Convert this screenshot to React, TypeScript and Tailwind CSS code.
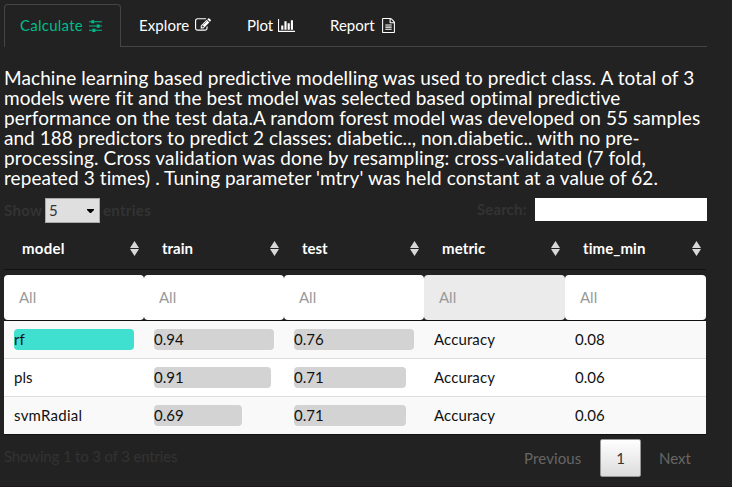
import React from "react";

const columns = ["model", "train", "test", "metric", "time_min"];

const rows = [
  { model: "rf", best: true, train: "0.94", trainW: 120, test: "0.76", testW: 120, metric: "Accuracy", time: "0.08" },
  { model: "pls", best: false, train: "0.91", trainW: 117, test: "0.71", testW: 112, metric: "Accuracy", time: "0.06" },
  { model: "svmRadial", best: false, train: "0.69", trainW: 88, test: "0.71", testW: 112, metric: "Accuracy", time: "0.06" },
];

const summary = [
  { text: "Machine learning based predictive modelling was used to predict class. A total of 3", tracking: "tracking-[0.09px]" },
  { text: "models were fit and the best model was selected based optimal predictive", tracking: "tracking-[0.05px]" },
  { text: "performance on the test data.A random forest model was developed on 55 samples", tracking: "tracking-[0.065px]" },
  { text: "and 188 predictors to predict 2 classes: diabetic.., non.diabetic.. with no pre-", tracking: "tracking-[0.035px]" },
  { text: "processing. Cross validation was done by resampling: cross-validated (7 fold,", tracking: "tracking-[0.155px]" },
  { text: "repeated 3 times) . Tuning parameter 'mtry' was held constant at a value of 62.", tracking: "tracking-[0.09px]" },
];

const grid = "grid grid-cols-[140px_140px_140px_141px_141px]";

function SlidersIcon() {
  return (
    <svg viewBox="128 0 1536 1792" className="h-[15px] w-[13px]" fill="currentColor">
      <path d="M480 1408v128h-352v-128h352zm352-128q26 0 45 19t19 45v256q0 26-19 45t-45 19h-256q-26 0-45-19t-19-45v-256q0-26 19-45t45-19h256zm160-384v128h-864v-128h864zm-640-512v128h-224v-128h224zm1312 1024v128h-736v-128h736zm-960-1152q26 0 45 19t19 45v256q0 26-19 45t-45 19h-256q-26 0-45-19t-19-45v-256q0-26 19-45t45-19h256zm640 512q26 0 45 19t19 45v256q0 26-19 45t-45 19h-256q-26 0-45-19t-19-45v-256q0-26 19-45t45-19h256zm320 128v128h-224v-128h224zm0-512v128h-864v-128h864z" />
    </svg>
  );
}

function EditIcon() {
  return (
    <svg viewBox="0 0 1792 1792" preserveAspectRatio="none" className="h-4 w-4" fill="currentColor">
      <path d="M888 1184l116-116-152-152-116 116v56h96v96h56zm440-720q-16-16-33 1l-350 350q-17 17-1 33t33-1l350-350q17-17 1-33zm80 594v190q0 119-84.5 203.5t-203.5 84.5h-832q-119 0-203.5-84.5t-84.5-203.5v-832q0-119 84.5-203.5t203.5-84.5h832q63 0 117 25 15 7 18 23 3 17-9 29l-49 49q-14 14-32 8-23-6-45-6h-832q-66 0-113 47t-47 113v832q0 66 47 113t113 47h832q66 0 113-47t47-113v-126q0-13 9-22l64-64q15-15 35-7t20 29zm-96-738l288 288-672 672h-288v-288zm444 132l-92 92-288-288 92-92q28-28 68-28t68 28l152 152q28 28 28 68t-28 68z" />
    </svg>
  );
}

function ChartIcon() {
  return (
    <svg viewBox="0 0 2048 1792" className="h-[15px] w-[17.14px]" fill="currentColor">
      <path d="M640 896v512h-256v-512h256zm384-512v1024h-256v-1024h256zm1024 1152v128h-2048v-1536h128v1408h1920zm-640-896v768h-256v-768h256zm384-384v1152h-256v-1152h256z" />
    </svg>
  );
}

function FileIcon() {
  return (
    <svg viewBox="128 0 1536 1792" className="h-[15px] w-[13px]" fill="currentColor">
      <path d="M1596 380q28 28 48 76t20 88v1152q0 40-28 68t-68 28h-1344q-40 0-68-28t-28-68v-1600q0-40 28-68t68-28h896q40 0 88 20t76 48zm-444-244v376h376q-10-29-22-41l-313-313q-12-12-41-22zm384 1528v-1024h-416q-40 0-68-28t-28-68v-416h-768v1536h1280zm-1024-864q0-14 9-23t23-9h704q14 0 23 9t9 23v64q0 14-9 23t-23 9h-704q-14 0-23-9t-9-23v-64zm736 224q14 0 23 9t9 23v64q0 14-9 23t-23 9h-704q-14 0-23-9t-9-23v-64q0-14 9-23t23-9h704zm0 256q14 0 23 9t9 23v64q0 14-9 23t-23 9h-704q-14 0-23-9t-9-23v-64q0-14 9-23t23-9h704z" />
    </svg>
  );
}

function SortIcon() {
  return (
    <svg viewBox="0 0 9 15" className="h-[15px] w-[9px]" fill="#d8d8d8">
      <path d="M4.5 0L9 7H0zM0 8H9L4.5 15z" />
    </svg>
  );
}

function Bar({ text, width, color }: { text: string; width: number; color: string }) {
  return (
    <div className={`h-[21px] rounded-[4px] leading-[21px] ${color}`} style={{ width }}>
      {text}
    </div>
  );
}

export default function App() {
  return (
    <div className="h-[487px] w-[732px] overflow-hidden border-b border-[#1d171b] bg-[#222222] pl-1 pt-1 font-['Lato',sans-serif] text-[15px] text-white [font-variant-ligatures:none]">
      <nav className="flex h-[43px] w-[703px] leading-[21px]">
        <div className="flex w-[117px] rounded-t-[4px] border border-b-0 border-[#464545] pl-[15px] pt-[10px] text-[#00bc8c]">
          <span className="w-[69px] tracking-[0.25px]">Calculate</span>
          <span className="pt-[3px]"><SlidersIcon /></span>
        </div>
        <div className="flex grow border-b border-[#464545] pt-[11px]">
          <div className="flex w-[108px] pl-[18px]">
            <span className="w-[56px] tracking-[0.1px]">Explore</span>
            <span className="pt-[2px]"><EditIcon /></span>
          </div>
          <div className="flex w-[83px] pl-[18px]">
            <span className="w-[31px]">Plot</span>
            <span className="pt-[3px]"><ChartIcon /></span>
          </div>
          <div className="flex pl-[18px]">
            <span className="w-[52px]">Report</span>
            <span className="pt-[3px]"><FileIcon /></span>
          </div>
        </div>
      </nav>

      <h4 className="mt-[21px] h-[130px] whitespace-nowrap text-[19px] leading-[20px]">
        {summary.map((line) => (
          <div key={line.text} className={line.tracking}>{line.text}</div>
        ))}
      </h4>

      <div className="flex h-[30px] w-[703px] justify-between font-bold text-[#333333]">
        <div className="flex leading-[25px]">
          <span className="w-[41px] tracking-[0.3px]">Show</span>
          <div className="flex h-[25px] w-[55px] items-center justify-between border border-[#a9a9a9] bg-[#dfdfdf] pl-[3px] pr-[5px] font-normal">
            <span>5</span>
            <svg viewBox="0 0 7 4" className="h-[4px] w-[7px]" fill="#000000"><path d="M0 0h7v1L4 4H3L0 1z" /></svg>
          </div>
          <span className="pl-[3px] tracking-[0.3px]">entries</span>
        </div>
        <div className="flex">
          <span className="w-[58px] leading-[23px] tracking-[0.1px]">Search:</span>
          <div className="h-[23px] w-[172px] bg-white" />
        </div>
      </div>

      <div className="w-[702px]">
        <div className={`${grid} h-[42px] border-b border-[#111111]`}>
          {columns.map((name) => (
            <div key={name} className="flex items-center justify-between pl-[18px] pr-[5px] font-bold">
              <span className={name === "model" ? "tracking-[0.25px]" : name === "metric" || name === "time_min" ? "tracking-[0.1px]" : ""}>{name}</span>
              <SortIcon />
            </div>
          ))}
        </div>
        <div className={`${grid} h-[51px] border-b border-[#111111] pt-[5px]`}>
          {columns.map((name) => (
            <div
              key={name}
              className={`h-[45px] rounded-[4px] pl-[15px] leading-[45px] text-[#999999] ${name === "metric" ? "bg-[#ebebeb]" : "bg-white"}`}
            >
              All
            </div>
          ))}
        </div>
        <div className="border-b border-[#111111] text-[#111111]">
          {rows.map((r, i) => (
            <div
              key={r.model}
              className={`${grid} leading-[21px] *:pl-[10px] *:pt-[8px] ${i === 0 ? "h-[37px]" : "h-[38px] border-t border-[#dddddd]"} ${i % 2 === 0 ? "bg-[#f9f9f9]" : "bg-white"}`}
            >
              <div className={r.model === "svmRadial" ? "tracking-[0.25px]" : ""}>
                <Bar text={r.model} width={120} color={r.best ? "bg-[#40e0d0]" : "bg-transparent"} />
              </div>
              <div><Bar text={r.train} width={r.trainW} color="bg-[#d3d3d3]" /></div>
              <div><Bar text={r.test} width={r.testW} color="bg-[#d3d3d3]" /></div>
              <div className="tracking-[0.1px]">{r.metric}</div>
              <div>{r.time}</div>
            </div>
          ))}
        </div>
      </div>

      <div className="flex w-[703px] justify-between pt-1">
        <div className="pt-[7px] leading-[21px] tracking-[-0.16px] text-[#333333]">Showing 1 to 3 of 3 entries</div>
        <div className="flex h-[38px] leading-[38px] text-[#666666]">
          <span className="w-[76px] tracking-[0.12px]">Previous</span>
          <span className="w-[41px] rounded-[2px] border border-[#979797] bg-linear-to-b from-white to-[#dcdcdc] text-center leading-[36px] text-[#333333]">1</span>
          <span className="w-[66px] pl-[18px]">Next</span>
        </div>
      </div>
    </div>
  );
}
